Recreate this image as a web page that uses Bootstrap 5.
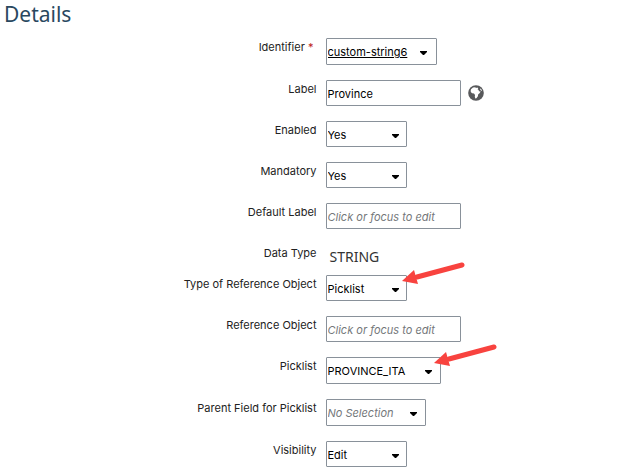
<!DOCTYPE html>
<html lang="en">
<head>
<meta charset="utf-8">
<meta name="viewport" content="width=device-width, initial-scale=1">
<title>Details</title>
<link href="https://cdn.jsdelivr.net/npm/bootstrap@5.3.0/dist/css/bootstrap.min.css" rel="stylesheet">
<style>
body { font-family: Inter, "Noto Sans", sans-serif; font-size: 11px; line-height: 18px; color: #222; background: #fff; }
.page-title { font-family: "Noto Sans", sans-serif; font-size: 21px; line-height: 28px; color: #29485f; padding-left: 4px; margin-bottom: 10px; }
.fields { gap: 15px; }
.field { gap: 9px; }
.field-name { flex: none; width: calc(50% + 4px); }
.required { color: #bb2020; }
.field .box { width: 81px; height: 26px; min-height: 0; padding: 1px 1px 0; border: 1px solid #89919a; border-radius: 1px; font-size: 11px; line-height: 20px; color: #000; }
.field select.box { padding-right: 16px; background: #fff url("data:image/svg+xml,%3Csvg xmlns='http://www.w3.org/2000/svg' width='7' height='4'%3E%3Cpath d='M0 0h7v1L4 4H3L0 1z'/%3E%3C/svg%3E") no-repeat right 7px top 12px / 7px 4px; }
.field input.box { width: 135px; }
.field select.box-id { width: 111px; height: 27px; text-decoration: underline; background-position: right 9px top 12px; }
.field select.box-picklist { width: 115px; height: 27px; background-position: right 8px top 12px; }
.field select.box-parent { width: 100px; height: 27px; font-style: italic; color: #74777a; background-position: right 8px top 12px; }
.field .box::placeholder { font-style: italic; color: #74777a; opacity: 1; }
.plain-value { font-family: "Noto Sans", sans-serif; font-size: 14px; line-height: 17px; color: #333; padding: 4px 0 0 4px; }
.field-plain { height: 16px; }
.globe { width: 16px; height: 16px; margin-left: 7px; }
.pointer { position: absolute; left: 100%; top: -13px; margin-left: -6px; width: 66px; height: 24px; pointer-events: none; }
.box-picklist + .pointer { margin-left: -8px; }
</style>
</head>
<body>
<main>
<h1 class="page-title fw-normal">Details</h1>
<form class="fields d-flex flex-column">
  <div class="field d-flex">
    <label class="field-name text-end" for="identifier">Identifier <span class="required">*</span>&nbsp;</label>
    <select class="form-select box box-id" id="identifier"><option>custom-string6</option></select>
  </div>
  <div class="field d-flex">
    <label class="field-name text-end" for="label">Label</label>
    <div class="d-flex align-items-center">
      <input class="form-control box" id="label" type="text" value="Province">
      <svg class="globe" viewBox="0 0 16 16" role="img" aria-label="Translations"><circle cx="8" cy="8" r="7.8" fill="#58595b"/><path fill="#fff" d="M3 4.2 5 2.6l2.2-.4.8.8 1.2-.6 1.1.8-.7 1 1 .9.4 1.1 1.7.2-1.2 1.9-1.4 1.3-.2 1.7-1.5 2-1.1.2-.5-1.8.2-1.6-1-1.6-1.9-.2-1.3-1.3-.1-1.5z"/><path fill="#fff" d="m12 3.4 1.2.6.8 2-.9-.3-.7-.9z"/></svg>
    </div>
  </div>
  <div class="field d-flex">
    <label class="field-name text-end" for="enabled">Enabled</label>
    <select class="form-select box" id="enabled"><option>Yes</option><option>No</option></select>
  </div>
  <div class="field d-flex">
    <label class="field-name text-end" for="mandatory">Mandatory</label>
    <select class="form-select box" id="mandatory"><option>Yes</option><option>No</option></select>
  </div>
  <div class="field d-flex">
    <label class="field-name text-end" for="default-label">Default Label</label>
    <input class="form-control box" id="default-label" type="text" placeholder="Click or focus to edit">
  </div>
  <div class="field field-plain d-flex">
    <label class="field-name text-end" for="data-type">Data Type</label>
    <output class="plain-value" id="data-type">STRING</output>
  </div>
  <div class="field d-flex">
    <label class="field-name text-end" for="ref-type">Type of Reference Object</label>
    <div class="position-relative">
      <select class="form-select box" id="ref-type"><option>Picklist</option></select>
      <svg class="pointer" viewBox="0 0 66 24" aria-hidden="true"><path d="M61 3 16 15" stroke="#f8433f" stroke-width="5" stroke-linecap="round"/><path d="M1 19 13 8l4 14z" fill="#f8433f"/></svg>
    </div>
  </div>
  <div class="field d-flex">
    <label class="field-name text-end" for="ref-object">Reference Object</label>
    <input class="form-control box" id="ref-object" type="text" placeholder="Click or focus to edit">
  </div>
  <div class="field d-flex">
    <label class="field-name text-end" for="picklist">Picklist</label>
    <div class="position-relative">
      <select class="form-select box box-picklist" id="picklist"><option>PROVINCE_ITA</option></select>
      <svg class="pointer" viewBox="0 0 66 24" aria-hidden="true"><path d="M61 3 16 15" stroke="#f8433f" stroke-width="5" stroke-linecap="round"/><path d="M1 19 13 8l4 14z" fill="#f8433f"/></svg>
    </div>
  </div>
  <div class="field d-flex">
    <label class="field-name text-end" for="parent">Parent Field for Picklist</label>
    <select class="form-select box box-parent" id="parent"><option>No Selection</option></select>
  </div>
  <div class="field d-flex">
    <label class="field-name text-end" for="visibility">Visibility</label>
    <select class="form-select box" id="visibility"><option>Edit</option><option>View</option></select>
  </div>
</form>
</main>
<script src="https://cdn.jsdelivr.net/npm/bootstrap@5.3.0/dist/js/bootstrap.bundle.min.js"></script>
</body>
</html>
